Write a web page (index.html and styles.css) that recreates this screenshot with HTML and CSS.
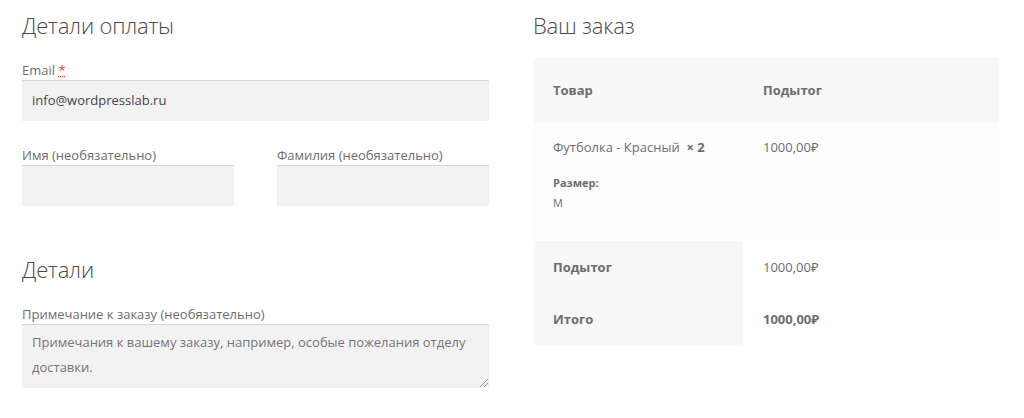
FILE: index.html
```html
<!DOCTYPE html>
<html lang="ru">
<head>
<meta charset="utf-8">
<link rel="stylesheet" href="styles.css">
</head>
<body>
<div class="page">
  <div class="col-left">
    <h3 class="title">Детали оплаты</h3>
    <div class="field">
      <label class="label">Email&nbsp;<abbr class="req" title="обязательно">*</abbr></label>
      <div class="input">info@wordpresslab.ru</div>
    </div>
    <div class="row2">
      <div class="field">
        <label class="label">Имя (необязательно)</label>
        <div class="input"></div>
      </div>
      <div class="field">
        <label class="label">Фамилия (необязательно)</label>
        <div class="input"></div>
      </div>
    </div>
    <h3 class="title title-2">Детали</h3>
    <div class="field field-note">
      <label class="label">Примечание к заказу (необязательно)</label>
      <div class="textarea">Примечания к вашему заказу, например, особые пожелания отделу доставки.<span class="grip"></span></div>
    </div>
  </div>
  <div class="col-right">
    <h3 class="title">Ваш заказ</h3>
    <table class="order">
      <thead>
        <tr><th class="c1">Товар</th><th class="c2">Подытог</th></tr>
      </thead>
      <tbody>
        <tr>
          <td class="c1">Футболка - Красный&nbsp; <strong class="qty">×&nbsp;2</strong>
            <dl class="meta"><dt>Размер:</dt><dd>M</dd></dl>
          </td>
          <td class="c2">1000,00₽</td>
        </tr>
      </tbody>
      <tfoot>
        <tr><th class="c1">Подытог</th><td class="c2">1000,00₽</td></tr>
        <tr><th class="c1">Итого</th><td class="c2"><strong>1000,00₽</strong></td></tr>
      </tfoot>
    </table>
  </div>
</div>
</body>
</html>
```

FILE: styles.css
```css
* { box-sizing: border-box; }
html, body { margin: 0; padding: 0; background: #fff; }
body {
  font-family: "Open Sans", "Noto Sans", "Liberation Sans", sans-serif;
  font-size: 13px;
  color: #6d6d6d;
}
.page {
  display: flex;
  gap: 44px;
  padding: 0 0 0 22px;
}
.col-left { width: 467px; }
.col-right { width: 466px; }
.title {
  margin: 0;
  padding-top: 11px;
  font-size: 22px;
  line-height: 28px;
  font-weight: 300;
  color: #4a4a4a;
  letter-spacing: -0.2px;
}
.title-2 { margin-top: 38px; }
.field { margin-top: 21px; }
.field-note { margin-top: 21px; }
.label {
  display: block;
  line-height: 20px;
  height: 20px;
  color: #6d6d6d;
}
.req {
  color: #e2401c;
  text-decoration: underline dotted;
  border: 0;
}
.input {
  height: 41px;
  background: #f2f2f2;
  box-shadow: inset 0 1px 1px rgba(0,0,0,.125);
  padding: 0 10px;
  line-height: 41px;
  color: #43454b;
}
.row2 {
  display: grid;
  grid-template-columns: 212px 212px;
  justify-content: space-between;
  margin-top: 3px;
}
.textarea {
  position: relative;
  height: 64px;
  background: #f2f2f2;
  box-shadow: inset 0 1px 1px rgba(0,0,0,.125);
  padding: 6px 10px;
  line-height: 25px;
  color: #757575;
}
.grip {
  position: absolute;
  right: 1px;
  bottom: 1px;
  width: 8px;
  height: 8px;
  background: linear-gradient(135deg, transparent 45%, #999 45%, #999 52%, transparent 52%, transparent 70%, #999 70%, #999 77%, transparent 77%);
}
.order {
  margin-top: 19px;
  width: 466px;
  border-collapse: collapse;
  border-spacing: 0;
}
.order th, .order td {
  text-align: left;
  vertical-align: top;
  padding: 0 20px;
}
.order .c1 { width: 210px; }
.order thead th {
  background: #f8f8f8;
  height: 64px;
  vertical-align: middle;
  font-weight: 700;
  color: #6d6d6d;
}
.order tbody td {
  background: #fdfdfd;
  height: 118px;
  padding-top: 15px;
  line-height: 20px;
}
.qty { color: #6d6d6d; font-weight: 700; }
.meta { margin: 16px 0 0; font-size: 11px; line-height: 20px; }
.meta dt { font-weight: 700; }
.meta dd { margin: 0; }
.order tfoot tr:first-child th, .order tfoot tr:first-child td { border-top: 2px solid #fff; }
.order tfoot th {
  background: #f8f8f8;
  font-weight: 700;
  height: 52px;
  vertical-align: middle;
}
.order tfoot tr:last-child th { height: 53px; }
.order tfoot td {
  background: #fff;
  vertical-align: middle;
}
.order tfoot strong { font-weight: 700; }
```
